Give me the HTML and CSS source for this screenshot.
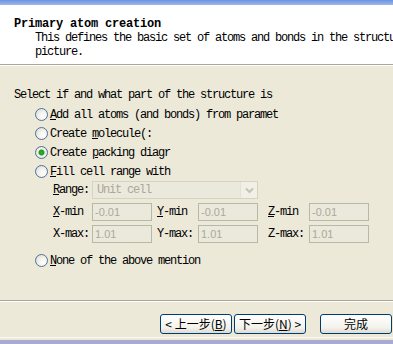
FILE: index.html
```html
<!DOCTYPE html>
<html lang="en">
<head>
    <meta charset="UTF-8">
    <title>Primary atom creation</title>
    <link rel="stylesheet" href="styles.css">
</head>
<body>
    <div class="dialog">
        <div class="caption-edge"></div>

        <div class="wiz-header">
            <div class="wiz-title">Primary atom creation</div>
            <div class="wiz-desc">This defines the basic set of atoms and bonds in the structure of the<br>picture.</div>
        </div>
        <div class="etched"></div>

        <div class="wiz-body">
            <div class="prompt">Select if and what part of the structure is</div>

            <div class="choices">
                <label class="choice"><span class="radio"></span><span><u>A</u>dd all atoms (and bonds) from paramet</span></label>
                <label class="choice"><span class="radio"></span><span>Create <u>m</u>olecule(:</span></label>
                <label class="choice"><span class="radio checked"></span><span>Create <u>p</u>acking diagr</span></label>
                <label class="choice"><span class="radio"></span><span><u>F</u>ill cell range with</span></label>
            </div>

            <div class="range-grid">
                <span class="fld-label"><u>R</u>ange:</span>
                <div class="combo"><span class="combo-text">Unit cell</span><span class="combo-btn">
                    <svg width="11" height="7" viewBox="0 0 11 7"><path d="M2 1.5 L5.5 5 L9 1.5" fill="none" stroke="#c6c4b6" stroke-width="2"/></svg>
                </span></div>

                <span class="fld-label row-start"><u>X</u>-min</span>
                <span class="edit">-0.01</span>
                <span class="fld-label mid"><u>Y</u>-min</span>
                <span class="edit">-0.01</span>
                <span class="fld-label far"><u>Z</u>-min</span>
                <span class="edit">-0.01</span>

                <span class="fld-label row-start">X-max:</span>
                <span class="edit">1.01</span>
                <span class="fld-label mid">Y-max:</span>
                <span class="edit">1.01</span>
                <span class="fld-label far">Z-max:</span>
                <span class="edit">1.01</span>
            </div>

            <label class="choice none-choice"><span class="radio"></span><span><u>N</u>one of the above mention</span></label>
        </div>
        <div class="etched"></div>

        <div class="wiz-buttons">
            <button class="xp-btn">&lt; 上一步(<u>B</u>)</button>
            <button class="xp-btn">下一步(<u>N</u>) &gt;</button>
            <button class="xp-btn finish">完成</button>
        </div>
        <div class="bottom-edge"></div>
    </div>
</body>
</html>
```

FILE: styles.css
```css
body {
    margin: 0;
    background: #ece9d8;
}
.dialog {
    width: 393px;
    height: 344px;
    overflow: hidden;
    background: #ece9d8;
    font-family: "Liberation Mono", monospace;
    font-size: 12px;
    letter-spacing: -1.2px;
    color: #000;
    white-space: nowrap;
}
.caption-edge {
    height: 5px;
    background: linear-gradient(#6e92dc, #9db8ee);
}
.wiz-header {
    height: 59px;
    box-sizing: border-box;
    padding: 12px 0 0 14px;
    background: #fff;
    line-height: 14px;
}
.wiz-title {
    font-weight: bold;
    letter-spacing: -0.2px;
}
.wiz-desc {
    padding-left: 21px;
}
.etched {
    height: 1px;
    background: #aca899;
    border-bottom: 1px solid #fff;
}
.wiz-body {
    height: 234px;
    box-sizing: border-box;
    padding: 22px 0 0 14px;
}
.prompt {
    line-height: 14px;
}
.choices {
    margin-top: 3px;
}
.choice {
    display: flex;
    align-items: center;
    height: 19px;
    padding-left: 21px;
}
.radio {
    width: 11px;
    height: 11px;
    margin-right: 2px;
    border: 1px solid #50729c;
    border-radius: 50%;
    background: radial-gradient(circle at 65% 65%, #ffffff 0, #f4f3ee 40%, #d6d4ca 100%);
    flex: none;
}
.radio.checked {
    background: radial-gradient(circle at 50% 50%, #2fb02f 0, #1f9a1f 2.5px, #f4f3ee 3.5px, #d6d4ca 100%);
}
.range-grid {
    display: grid;
    grid-template-columns: 39px 60px 46px 60px 51px 60px;
    grid-auto-rows: 18px;
    row-gap: 4px;
    margin-left: 39px;
    align-items: center;
}
.fld-label.row-start {
    grid-column: 1;
}
.fld-label.mid {
    padding-left: 5px;
}
.fld-label.far {
    padding-left: 10px;
}
.combo {
    grid-column: 2 / 5;
    height: 18px;
    box-sizing: border-box;
    display: flex;
    align-items: center;
    border: 1px solid #d6d3c4;
    background: #ebe9dc;
}
.combo-text {
    flex: 1;
    padding-left: 4px;
    color: #aca899;
}
.combo-btn {
    width: 16px;
    height: 16px;
    display: flex;
    align-items: center;
    justify-content: center;
    background: #f1efe6;
    border-left: 1px solid #e4e2d6;
}
.edit {
    height: 18px;
    box-sizing: border-box;
    border: 1px solid #b9b7a8;
    background: #ebe9dc;
    padding: 1px 0 0 2px;
    font-family: "Liberation Sans", sans-serif;
    font-size: 11px;
    letter-spacing: 0;
    line-height: 14px;
    color: #aca899;
}
.none-choice {
    margin-top: 8px;
}
.wiz-buttons {
    height: 35px;
    box-sizing: border-box;
    display: flex;
    justify-content: flex-end;
    padding: 12px 1px 0 0;
    gap: 2px;
}
.xp-btn {
    width: 72px;
    height: 20px;
    padding: 0;
    border: 1px solid #003c74;
    border-radius: 3px;
    background: linear-gradient(#ffffff, #f3f2ec 70%, #dedbcf);
    font-family: "Noto Sans CJK SC", sans-serif;
    font-size: 12px;
    line-height: 16px;
    letter-spacing: 0;
    color: #000;
}
.xp-btn.finish {
    margin-left: 12px;
}
.bottom-edge {
    height: 7px;
    border-top: 1px solid #fbfaf4;
    box-sizing: border-box;
    background: linear-gradient(#ece9d8 0, #ece9d8 2px, #a9acd2 2px);
}
```
